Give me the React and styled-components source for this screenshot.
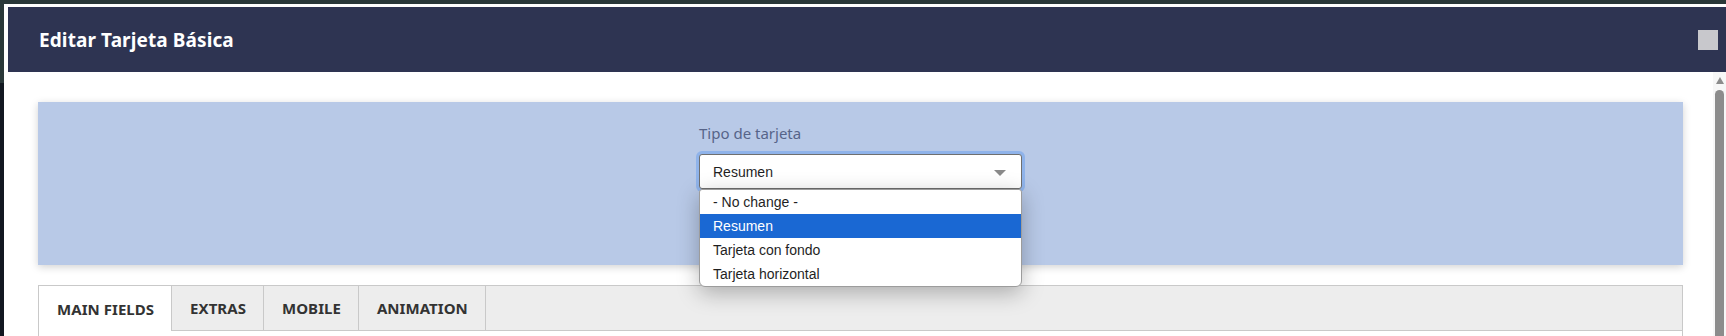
import React from "react";
import styled, { createGlobalStyle } from "styled-components";

const GlobalStyle = createGlobalStyle`
  html, body {
    margin: 0;
    padding: 0;
    height: 336px;
    overflow: hidden;
  }
  body {
    background: linear-gradient(#2a3839 0, #2a3839 83px, #121821 83px);
    font-family: "Noto Sans", "Liberation Sans", sans-serif;
  }
  #root {
    height: 100%;
  }
`;

const tabs = ["MAIN FIELDS", "EXTRAS", "MOBILE", "ANIMATION"];
const options = ["- No change -", "Resumen", "Tarjeta con fondo", "Tarjeta horizontal"];

const App = () => {
  return (
    <>
      <GlobalStyle />
      <Backdrop>
        <Dialog>
          <Header>
            <Title>Editar Tarjeta Básica</Title>
            <CloseBox aria-label="Cerrar" />
          </Header>
          <Body>
            <Content>
              <TypePanel>
                <Field>
                  <FieldLabel>Tipo de tarjeta</FieldLabel>
                  <SelectBox>
                    <span>Resumen</span>
                    <Caret />
                    <OptionList>
                      {options.map((o) => (
                        <OptionItem key={o} selected={o === "Resumen"}>
                          {o}
                        </OptionItem>
                      ))}
                    </OptionList>
                  </SelectBox>
                </Field>
              </TypePanel>
              <TabBar>
                {tabs.map((t, i) => (
                  <Tab key={t} active={i === 0}>
                    {t}
                  </Tab>
                ))}
                <TabFill />
              </TabBar>
              <TabPanel />
            </Content>
            <ScrollRail>
              <ScrollArrow />
              <ScrollThumb />
            </ScrollRail>
          </Body>
        </Dialog>
      </Backdrop>
    </>
  );
};

export default App;

const Backdrop = styled.div`
  height: 100%;
  padding: 4px 0 0 4px;
  box-sizing: border-box;
`;

const Dialog = styled.div`
  height: 100%;
  background: #ffffff;
  padding: 3px 0 0 4px;
  box-sizing: border-box;
  display: flex;
  flex-direction: column;
`;

const Header = styled.div`
  height: 65px;
  flex: none;
  background: #2e3452;
  display: flex;
  align-items: center;
  justify-content: space-between;
  padding: 0 8px 0 31px;
`;

const Title = styled.h1`
  margin: 0;
  color: #ffffff;
  font-family: "Noto Sans", sans-serif;
  font-weight: 700;
  font-size: 19px;
  letter-spacing: 0.1px;
`;

const CloseBox = styled.div`
  width: 20px;
  height: 20px;
  background: #c8c8cc;
`;

const Body = styled.div`
  flex: 1;
  display: flex;
  min-height: 0;
`;

const Content = styled.div`
  flex: 1;
  padding: 30px 30px 0 30px;
  min-width: 0;
  display: flex;
  flex-direction: column;
`;

const TypePanel = styled.div`
  height: 163px;
  flex: none;
  background: #b8c9e7;
  box-shadow: 0 2px 8px rgba(0, 0, 0, 0.18);
  display: flex;
  justify-content: center;
  padding-top: 21px;
  box-sizing: border-box;
`;

const Field = styled.div`
  width: 323px;
  display: flex;
  flex-direction: column;
`;

const FieldLabel = styled.label`
  font-family: "Noto Sans", sans-serif;
  font-size: 15px;
  line-height: 20px;
  color: #566489;
  margin-bottom: 11px;
`;

const SelectBox = styled.div`
  position: relative;
  height: 35px;
  box-sizing: border-box;
  border: 1px solid #6f6f6f;
  border-radius: 3px;
  background: #ffffff;
  box-shadow: 0 0 0 3px #8fb3ea;
  display: flex;
  align-items: center;
  justify-content: space-between;
  padding: 0 15px 0 13px;
  font-family: "Liberation Sans", Arial, sans-serif;
  font-size: 14px;
  color: #1f1f1f;
`;

const Caret = styled.span`
  width: 0;
  height: 0;
  border-left: 6.5px solid transparent;
  border-right: 6.5px solid transparent;
  border-top: 6px solid #8a8a8a;
  margin-top: 2px;
`;

const OptionList = styled.ul`
  position: absolute;
  top: 100%;
  left: -1px;
  right: -1px;
  margin: 1px 0 0;
  padding: 0;
  list-style: none;
  background: #ffffff;
  border: 1px solid #9c9c9c;
  border-radius: 3px 3px 6px 6px;
  box-shadow: 0 6px 22px rgba(0, 0, 0, 0.28);
  overflow: hidden;
  z-index: 5;
`;

const OptionItem = styled.li`
  height: 24px;
  line-height: 24px;
  padding-left: 13px;
  font-family: "Liberation Sans", Arial, sans-serif;
  font-size: 14px;
  color: ${(p) => (p.selected ? "#ffffff" : "#1f1f1f")};
  background: ${(p) => (p.selected ? "#1a68d3" : "transparent")};
`;

const TabBar = styled.div`
  margin-top: 20px;
  height: 44px;
  flex: none;
  display: flex;
  background: #ededed;
  border: 1px solid #c9c9c9;
`;

const Tab = styled.div`
  display: flex;
  align-items: center;
  padding: 0 17px 0 18px;
  border-right: 1px solid #c9c9c9;
  background: ${(p) => (p.active ? "#ffffff" : "transparent")};
  margin-bottom: ${(p) => (p.active ? "-1px" : "0")};
  font-family: "Noto Sans", sans-serif;
  font-weight: 700;
  font-size: 15px;
  letter-spacing: 0.05px;
  color: #333333;
`;

const TabFill = styled.div`
  flex: 1;
`;

const TabPanel = styled.div`
  flex: 1;
  border-left: 1px solid #c9c9c9;
  border-right: 1px solid #c9c9c9;
`;

const ScrollRail = styled.div`
  width: 13px;
  flex: none;
  background: #f7f7f7;
  display: flex;
  flex-direction: column;
  align-items: center;
  padding-top: 5px;
  box-sizing: border-box;
`;

const ScrollArrow = styled.div`
  width: 0;
  height: 0;
  border-left: 4.5px solid transparent;
  border-right: 4.5px solid transparent;
  border-bottom: 7px solid #8c8c8c;
`;

const ScrollThumb = styled.div`
  margin-top: 6px;
  width: 9px;
  flex: 1;
  background: #8c8c8c;
  border-radius: 5px 5px 0 0;
`;
